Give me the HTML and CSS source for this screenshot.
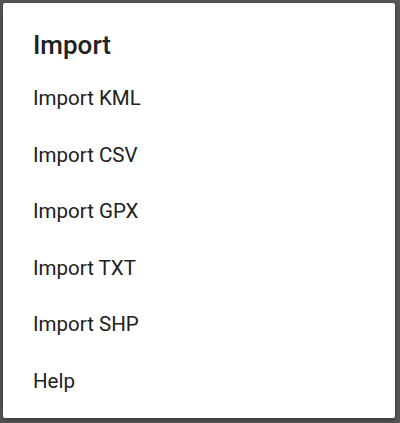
FILE: index.html
```html
<!DOCTYPE html>
<html lang="en">

<head>
    <meta charset="UTF-8">
    <meta name="viewport" content="width=device-width, initial-scale=1.0">
    <title>Import</title>
    <link rel="stylesheet" href="styles.css">
</head>

<body>
    <div class="dialog">
        <h1 class="dialog-title">Import</h1>
        <ul class="menu">
            <li class="menu-item">Import KML</li>
            <li class="menu-item">Import CSV</li>
            <li class="menu-item">Import GPX</li>
            <li class="menu-item">Import TXT</li>
            <li class="menu-item">Import SHP</li>
            <li class="menu-item">Help</li>
        </ul>
    </div>
</body>

</html>
```
FILE: styles.css
```css
html,
body {
    margin: 0;
    height: 100%;
}

body {
    background-color: #585858;
    font-family: Roboto, "Noto Sans", Arial, sans-serif;
    color: #212121;
    padding: 3px 5px 5px 3px;
    box-sizing: border-box;
    overflow: hidden;
}

.dialog {
    background-color: #ffffff;
    width: 392px;
    height: 415px;
    border-radius: 2px;
    box-shadow: 0 2px 6px rgba(0, 0, 0, 0.4);
    padding: 26px 0 8px 30px;
    box-sizing: border-box;
}

.dialog-title {
    margin: 0;
    font-size: 26px;
    line-height: 32px;
    font-weight: 500;
}

.menu {
    list-style: none;
    margin: 9px 0 0;
    padding: 0;
}

.menu-item {
    font-size: 20.5px;
    line-height: 56.5px;
}
```
